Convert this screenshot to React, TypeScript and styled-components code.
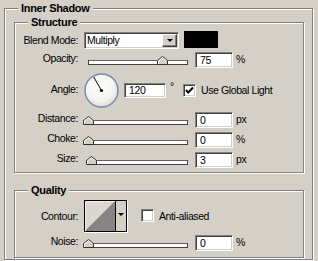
import React from 'react';
import styled, { createGlobalStyle } from 'styled-components';

type SliderRowProps = {
  label: string;
  value: string;
  unit: string;
  percent: number;
};

const TRACK_WIDTH = 100;

const GlobalStyle = createGlobalStyle`
  html, body {
    margin: 0;
    padding: 0;
  }
  body {
    width: 318px;
    height: 261px;
    overflow: hidden;
    background: #d4d0c8;
    color: #000;
    font-family: 'Liberation Sans', Arial, sans-serif;
    font-size: 10.5px;
    letter-spacing: -0.4px;
  }
`;

const SliderRow: React.FC<SliderRowProps> = ({ label, value, unit, percent }) => (
  <Row $h={20}>
    <Label $lift={2}>{label}</Label>
    <Slider>
      <Track />
      <Thumb style={{ left: Math.round((percent / 100) * (TRACK_WIDTH - 1)) - 5 }}>
        <svg width="11" height="9" viewBox="0 0 11 9">
          <polygon points="0.5,8.5 0.5,4.5 5.5,0.5 10.5,4.5 10.5,8.5" fill="#d4d0c8" stroke="#303030" />
          <polyline points="1.5,8 1.5,5 5.5,1.8 9,4.6" fill="none" stroke="#fff" />
        </svg>
      </Thumb>
    </Slider>
    <NumField $w={38} $h={16}>{value}</NumField>
    <Unit>{unit}</Unit>
  </Row>
);

const CheckBox: React.FC<{ checked?: boolean }> = ({ checked }) => (
  <Box>
    {checked && (
      <svg width="9" height="9" viewBox="0 0 9 9">
        <path d="M1 4 L3.2 6.6 L8 1.5" fill="none" stroke="#000" strokeWidth="2" />
      </svg>
    )}
  </Box>
);

const App: React.FC = () => {
  const angle = 120;
  const rad = (angle * Math.PI) / 180;
  const handX = 17.5 + Math.cos(rad) * 15.5;
  const handY = 17.5 - Math.sin(rad) * 15.5;

  return (
    <>
      <GlobalStyle />
      <Panel>
        <Legend $left={4}>Inner Shadow</Legend>
        <Group $top={7} $bottom={2}>
          <Legend $left={13}>Structure</Legend>
          <Row $h={20}>
            <Label>Blend Mode:</Label>
            <Select>
              <span>Multiply</span>
              <SelectButton>
                <Arrow />
              </SelectButton>
            </Select>
            <Swatch />
          </Row>
          <SliderRow label="Opacity:" value="75" unit="%" percent={75} />
          <Row $h={40}>
            <Label $lift={1}>Angle:</Label>
            <svg width="35" height="35" viewBox="0 0 35 35">
              <defs>
                <radialGradient id="dialFill" cx="45%" cy="40%" r="60%">
                  <stop offset="0%" stopColor="#ffffff" />
                  <stop offset="70%" stopColor="#f4f3f0" />
                  <stop offset="100%" stopColor="#dcdad4" />
                </radialGradient>
              </defs>
              <circle cx="17.5" cy="17.5" r="16.5" fill="url(#dialFill)" stroke="#7489ad" strokeWidth="1.4" />
              <line x1="17.5" y1="17.5" x2={handX} y2={handY} stroke="#000" strokeWidth="1" />
              <circle cx="17.5" cy="17.5" r="1.6" fill="#000" />
            </svg>
            <NumField $w={42} $h={15} $gap={5}>120</NumField>
            <Degree>°</Degree>
            <CheckBox checked />
            <CheckText>Use Global Light</CheckText>
          </Row>
          <SliderRow label="Distance:" value="0" unit="px" percent={0} />
          <SliderRow label="Choke:" value="0" unit="%" percent={0} />
          <SliderRow label="Size:" value="3" unit="px" percent={3} />
        </Group>
        <Group $top={17} $bottom={4}>
          <Legend $left={13}>Quality</Legend>
          <Row $h={35}>
            <Label>Contour:</Label>
            <ContourPicker>
              <svg width="30" height="30" viewBox="0 0 30 30">
                <rect x="0" y="0" width="30" height="30" fill="#dad7d0" />
                <polygon points="0,30 30,0 30,30" fill="#858585" />
                <polyline points="0.5,30 0.5,0.5 30,0.5" fill="none" stroke="#f2f1ee" />
              </svg>
              <ContourButton>
                <Arrow />
              </ContourButton>
            </ContourPicker>
            <CheckBox />
            <CheckText>Anti-aliased</CheckText>
          </Row>
          <SliderRow label="Noise:" value="0" unit="%" percent={0} />
        </Group>
      </Panel>
    </>
  );
};

const Panel = styled.div`
  box-sizing: border-box;
  width: 309px;
  height: 252px;
  margin: 8px 0 0 4px;
  padding: 0 8px 0 9px;
  border: 1px solid #808080;
  box-shadow: inset 1px 1px 0 #fff, 1px 1px 0 #fff;
`;

const Legend = styled.div<{ $left: number }>`
  display: table;
  margin: -7px 0 1px ${(p) => p.$left}px;
  padding: 0 3px;
  background: #d4d0c8;
  font-size: 11px;
  font-weight: bold;
  letter-spacing: -0.3px;
  line-height: 13px;
`;

const Group = styled.div<{ $top: number; $bottom: number }>`
  margin-top: ${(p) => p.$top}px;
  padding-bottom: ${(p) => p.$bottom}px;
  border: 1px solid #808080;
  box-shadow: inset 1px 1px 0 #fff, 1px 1px 0 #fff;
`;

const Row = styled.div<{ $h: number }>`
  display: flex;
  align-items: center;
  height: ${(p) => p.$h}px;
  white-space: nowrap;
`;

const Label = styled.span<{ $lift?: number }>`
  box-sizing: border-box;
  width: 63px;
  margin-right: 6px;
  padding-bottom: ${(p) => (p.$lift ?? 0) * 2}px;
  text-align: right;
  line-height: 12px;
`;

const Select = styled.div`
  box-sizing: border-box;
  display: flex;
  align-items: center;
  justify-content: space-between;
  width: 95px;
  height: 17px;
  padding-left: 2px;
  background: #fff;
  border: 1px solid;
  border-color: #808080 #fff #fff #808080;
  box-shadow: inset 1px 1px 0 #404040, inset -1px -1px 0 #d4d0c8;
  line-height: 12px;
`;

const SelectButton = styled.div`
  box-sizing: border-box;
  display: flex;
  align-items: center;
  justify-content: center;
  width: 15px;
  height: 13px;
  margin-right: 1px;
  background: #d4d0c8;
  border: 1px solid;
  border-color: #fff #404040 #404040 #fff;
  box-shadow: inset -1px -1px 0 #808080;
`;

const Arrow = styled.span`
  width: 0;
  height: 0;
  border-left: 3px solid transparent;
  border-right: 3px solid transparent;
  border-top: 3px solid #000;
`;

const Swatch = styled.div`
  width: 34px;
  height: 17px;
  margin-left: 5px;
  margin-bottom: 2px;
  background: #000;
`;

const Slider = styled.div`
  position: relative;
  display: flex;
  align-items: flex-end;
  width: ${TRACK_WIDTH}px;
  height: 9px;
  margin: 1px 7px 0 4px;
`;

const Track = styled.div`
  box-sizing: border-box;
  width: 100%;
  height: 5px;
  background: #fff;
  border: 1px solid #404040;
  border-top-color: #606060;
`;

const Thumb = styled.div`
  position: absolute;
  bottom: 0;
  width: 11px;
  height: 9px;
  line-height: 0;
`;

const NumField = styled.div<{ $w: number; $h: number; $gap?: number }>`
  box-sizing: border-box;
  width: ${(p) => p.$w}px;
  height: ${(p) => p.$h}px;
  margin-left: ${(p) => p.$gap ?? 0}px;
  padding-left: 4px;
  background: #fff;
  border: 1px solid;
  border-color: #808080 #fff #fff #808080;
  box-shadow: inset 1px 1px 0 #404040, inset -1px -1px 0 #d4d0c8;
  line-height: ${(p) => p.$h - 2}px;
`;

const Unit = styled.span`
  margin-left: 3px;
  padding-bottom: 3px;
  line-height: 12px;
`;

const Degree = styled.span`
  width: 13px;
  margin-left: 4px;
  padding-bottom: 8px;
  line-height: 12px;
`;

const Box = styled.div`
  box-sizing: border-box;
  display: flex;
  align-items: center;
  justify-content: center;
  width: 13px;
  height: 13px;
  background: #fff;
  border: 1px solid;
  border-color: #808080 #fff #fff #808080;
  box-shadow: inset 1px 1px 0 #404040, inset -1px -1px 0 #d4d0c8;
`;

const CheckText = styled.span`
  margin-left: 5px;
  line-height: 12px;
`;

const ContourPicker = styled.div`
  box-sizing: border-box;
  display: flex;
  width: 43px;
  height: 32px;
  margin-right: 14px;
  border: 1px solid #000;
  box-shadow: 1px 1px 0 #fff;
`;

const ContourButton = styled.div`
  display: flex;
  justify-content: center;
  align-items: flex-start;
  width: 10px;
  padding-top: 12px;
  border-left: 1px solid #000;
  background: #d4d0c8;
`;

export default App;
